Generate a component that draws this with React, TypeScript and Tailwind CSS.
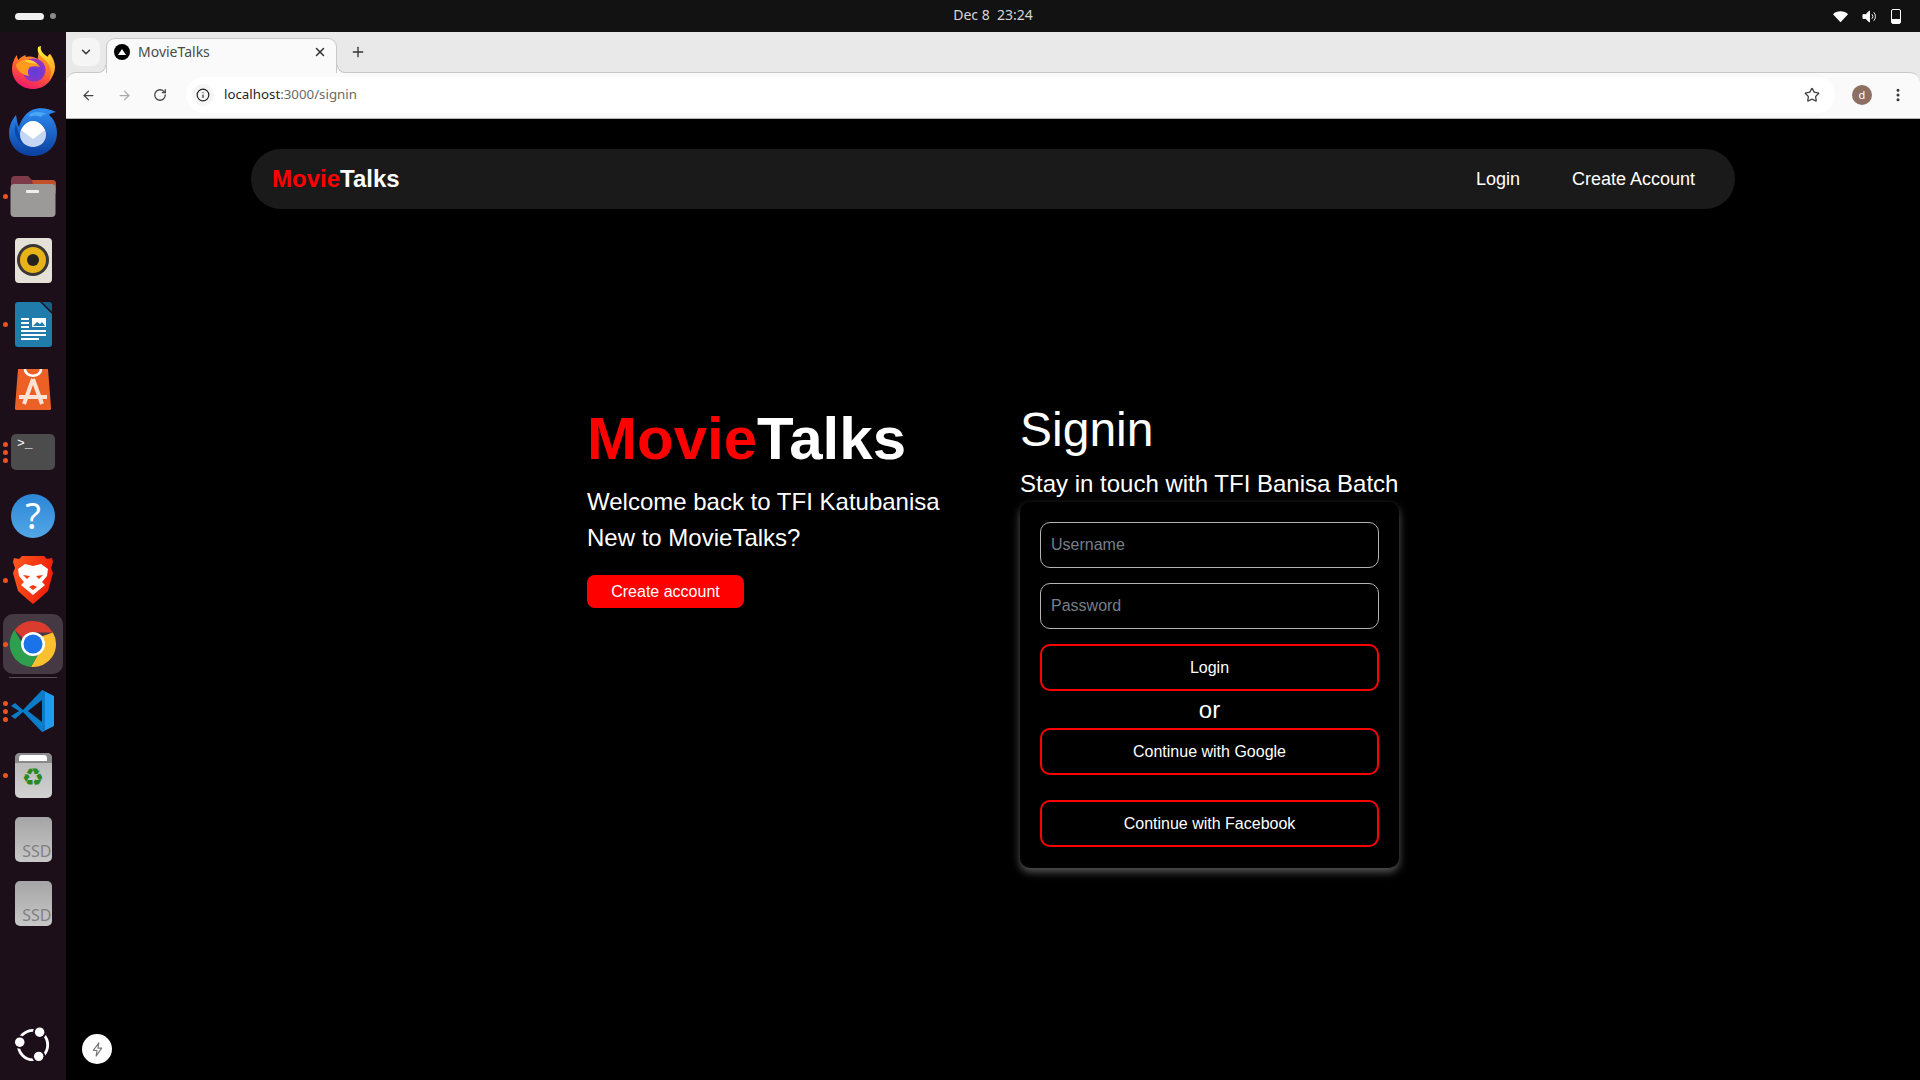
import React from 'react';
import { ArrowLeft, ArrowRight, ChevronDown, EllipsisVertical, Info, Plus, RotateCw, Star, X } from 'lucide-react';

const Firefox = () => (
    <svg viewBox="0 0 44 44" className="w-[44px] h-[44px]">
        <defs>
            <linearGradient id="ff1" x1="0.7" y1="0" x2="0.3" y2="1">
                <stop offset="0" stopColor="#ffb01f" />
                <stop offset="0.5" stopColor="#ff6a2a" />
                <stop offset="1" stopColor="#f0146e" />
            </linearGradient>
            <linearGradient id="ff3" x1="0.3" y1="0" x2="0.6" y2="1">
                <stop offset="0" stopColor="#fff03a" />
                <stop offset="1" stopColor="#ff9a1f" />
            </linearGradient>
            <radialGradient id="ff2" cx="0.55" cy="0.6" r="0.6">
                <stop offset="0" stopColor="#5a3fd8" />
                <stop offset="1" stopColor="#a22fbe" />
            </radialGradient>
        </defs>
        <path d="M29 1c-.5 4 1 6 4 9 1 1 2 1 3 2 1-2 1-3 2-3 4 5 5 10 5 13 0 12-9 21-21 21C10 43 1 34 1 23c0-3 .5-6 2-9 .5-2 2-4 3-5 0 2 .5 4 1.500 5 2-3 5-4 7-5 0 1 0 2 1 2 4-1 8 0 11 2 1-4 1-8 3-12z" fill="url(#ff1)" />
        <path d="M26 2c-1 5 1 8 5 11 5 4 8 9 8 14 0 3-1 6-2 8 4-4 6-8 6-13 0-3-1-8-5-13-1 0-1 1-2 3-1-1-2-1-3-2-3-3-5-5-4-9z" fill="url(#ff3)" transform="translate(1 -1)" />
        <circle cx="23" cy="24" r="11.500" fill="url(#ff2)" />
        <path d="M5 19c3-5 8-6 13-5 5 1 8 3 11 7-3-1-7-1-10 0-2 2-3 5-1 9-6-1-12-5-13-11z" fill="#ff9a1f" />
        <path d="M13 15c4-2 10-1 13 3-4-1-8-1-13-3z" fill="#ffd33a" />
    </svg>
);

const Thunderbird = () => (
    <svg viewBox="0 0 50 50" className="w-[50px] h-[50px]">
        <defs>
            <linearGradient id="tb1" x1="0.5" y1="0" x2="0.5" y2="1">
                <stop offset="0" stopColor="#2f8df2" />
                <stop offset="1" stopColor="#0a3f9e" />
            </linearGradient>
        </defs>
        <path d="M24 3c7-3 16-2 24 2-3 1-6 1-7 3 5 4 8 11 8 18 0 13-10 23-24 23S1 39 1 26C1 20 3 14 8 8c1 5 1 8 3 12 2-8 7-14 13-17z" fill="url(#tb1)" />
        <path d="M24 6c5-2 10-1 15 1-3 0-5 1-6 3-4-2-8-2-12 0 0-2 1-3 3-4z" fill="#4aa8f5" />
        <path d="M8 16c-1 4-2 8 0 13 3 6 8 10 15 11-5-3-9-6-11-11-2-4-3-8-4-13z" fill="#0a47ad" />
        <path d="M13 23c3-6 8-9 12-9s9 3 12 9c1 2 1 3 1 5 0 7-6 12-13 12s-13-5-13-12c0-2 0-3 1-5z" fill="#c3d6f2" />
        <path d="M13 23c3-6 8-9 12-9s9 3 12 9L25 32z" fill="#ffffff" />
    </svg>
);

const Files = () => (
    <svg viewBox="0 0 46 44" className="w-[46px] h-[44px]">
        <path d="M1 6a4 4 0 014-4h13l4 4h20a4 4 0 014 4v10H1z" fill="#7d3a48" />
        <path d="M22 6h20a4 4 0 014 4v6H24z" fill="#c2502a" />
        <rect x="0.500" y="10" width="45" height="33" rx="4" fill="#9c9a98" />
        <rect x="16" y="16" width="13" height="3" rx="1" fill="#eeeeee" />
    </svg>
);

const Rhythmbox = () => (
    <div className="w-[37px] h-[45px] rounded-[4px] bg-[#e6e1d6] flex items-center justify-center">
        <div className="w-[32px] h-[32px] rounded-full bg-[#3b3734] flex items-center justify-center">
            <div className="w-[26px] h-[26px] rounded-full bg-[#e8b318] flex items-center justify-center">
                <div className="w-[12px] h-[12px] rounded-full bg-[#24211f]" />
            </div>
        </div>
    </div>
);

const Writer = () => (
    <svg viewBox="0 0 37 45" className="w-[37px] h-[45px]">
        <path d="M3 0h22l12 12v30a3 3 0 01-3 3H3a3 3 0 01-3-3V3a3 3 0 013-3z" fill="#1f7cab" />
        <path d="M27 0h7a3 3 0 013 3v7z" fill="#15618c" />
        <rect x="6" y="16" width="8" height="2" fill="#fff" />
        <rect x="6" y="20" width="8" height="2" fill="#fff" />
        <rect x="6" y="24" width="8" height="2" fill="#fff" />
        <rect x="6" y="28" width="25" height="2" fill="#fff" />
        <rect x="6" y="32" width="25" height="2" fill="#fff" />
        <rect x="6" y="36" width="18" height="2" fill="#fff" />
        <rect x="17" y="16" width="14" height="9" fill="#fff" />
        <path d="M18 24l4-4 3 2 2-2 3 4z" fill="#1f7cab" />
    </svg>
);

const AppStore = () => (
    <svg viewBox="0 0 36 44" className="w-[36px] h-[44px]">
        <path d="M3 3h30l3 38a2 2 0 01-2 3H2a2 2 0 01-2-3z" fill="#ec5f25" />
        <path d="M10 3c0 9 16 9 16 0" fill="none" stroke="#fff" strokeWidth="2.500" />
        <path d="M18 13L9 38M18 13l9 25M4 31h28" fill="none" stroke="#fbe3d6" strokeWidth="4" />
    </svg>
);

const Terminal = () => (
    <div className="w-[44px] h-[36px] rounded-[5px] bg-[#4c4c4c] pl-[6px] pt-[3px] text-white text-[13px] leading-[14px] font-['Liberation_Mono',monospace]">&gt;_</div>
);

const Help = () => (
    <div className="w-[44px] h-[44px] rounded-full bg-gradient-to-b from-[#2b86d6] to-[#52a7e6] flex items-center justify-center text-white text-[36px] font-['Noto_Sans',sans-serif]">?</div>
);

const Brave = () => (
    <svg viewBox="0 0 40 48" className="w-[40px] h-[48px]">
        <defs>
            <linearGradient id="br1" x1="0" y1="0" x2="1" y2="0.3">
                <stop offset="0" stopColor="#ff5a1f" />
                <stop offset="1" stopColor="#f01f0a" />
            </linearGradient>
        </defs>
        <path d="M9 0h22l3 3 5-1 1 4-2 6 2 5-5 18-9 8-6 5-6-5-9-8L0 17l2-5-2-6 1-4 5 1z" fill="url(#br1)" />
        <path d="M5 13l7-5 8 2 8-2 7 5-1 7-5 6 3 3-6 5-6 5-6-5-6-5 3-3-5-6z" fill="#ffffff" />
        <path d="M10 19l7 1-3 3zM30 19l-7 1 3 3zM16 31l4-2 4 2-4 3z" fill="#f23c10" />
    </svg>
);

const Chrome = () => (
    <svg viewBox="0 0 48 48" className="w-[48px] h-[48px]">
        <path d="M24 1a23 23 0 0119.900 11.500H24a11.500 11.500 0 00-10 5.800L5.600 9.900A23 23 0 0124 1z" fill="#dc3c2e" />
        <path d="M43.900 12.500A23 23 0 0122 47l9.900-17.500a11.500 11.500 0 00-1-12.500z" fill="#fbc02d" />
        <path d="M22 47A23 23 0 015.600 9.900L14 24.500a11.500 11.500 0 0017.900 5z" fill="#2f9e4f" />
        <circle cx="24" cy="24" r="12" fill="#ffffff" />
        <circle cx="24" cy="24" r="9.500" fill="#1a73e8" />
    </svg>
);

const VsCode = () => (
    <svg viewBox="0 0 44 44" className="w-[44px] h-[44px]">
        <path d="M31 1l12 6v30l-12 6z" fill="#1f9cf0" />
        <path d="M31 1L12 21 4 14 0 17l8 5-8 5 4 3 8-7 19 20 3-2V3z" fill="#0a7cc8" />
        <path d="M31 11L17 22l14 11z" fill="#1d0f1a" />
    </svg>
);

const Trash = () => (
    <div className="w-[37px] h-[45px] rounded-[5px] bg-gradient-to-b from-[#b5b5b5] to-[#d2d2d2] flex flex-col items-center overflow-hidden">
        <div className="w-full h-[10px] bg-[#8a8a8a] flex justify-center pt-[2px]">
            <div className="w-[28px] h-[6px] rounded-t-[3px] bg-white" />
        </div>
        <div className="text-[#2a8a1e] text-[25px] leading-[30px] font-['DejaVu_Sans',sans-serif]">♻</div>
    </div>
);

const Ssd = () => (
    <div className="w-[37px] h-[45px] rounded-[5px] bg-gradient-to-b from-[#a5a5a5] to-[#c8c8c8] flex items-end justify-end pb-[2px] text-[#808080] text-[16px] leading-[18px] font-['Noto_Sans',sans-serif]">SSD</div>
);

const UbuntuLogo = () => (
    <svg viewBox="0 0 38 38" className="w-[36px] h-[36px]">
        <circle cx="19" cy="19" r="15.500" fill="none" stroke="#fff" strokeWidth="3" />
        <circle cx="26" cy="5.500" r="7" fill="#1d0f1a" />
        <circle cx="26" cy="5.500" r="5" fill="#fff" />
        <circle cx="5" cy="16" r="7" fill="#1d0f1a" />
        <circle cx="5" cy="16" r="5" fill="#fff" />
        <circle cx="25" cy="31" r="7" fill="#1d0f1a" />
        <circle cx="25" cy="31" r="5" fill="#fff" />
    </svg>
);

const dockItems = [
    { icon: <Firefox />, dots: 0 },
    { icon: <Thunderbird />, dots: 0 },
    { icon: <Files />, dots: 1 },
    { icon: <Rhythmbox />, dots: 0 },
    { icon: <Writer />, dots: 1 },
    { icon: <AppStore />, dots: 0 },
    { icon: <Terminal />, dots: 3 },
    { icon: <Help />, dots: 0 },
    { icon: <Brave />, dots: 1 },
];

const DockItem: React.FC<{ dots: number; children: React.ReactNode }> = ({ dots, children }) => (
    <div className="relative h-16 flex items-center justify-center">
        {dots > 0 && (
            <div className="absolute z-10 left-[3px] top-0 bottom-0 flex flex-col justify-center gap-[3px]">
                {[...Array(dots)].map((_, i) => (
                    <div key={i} className="w-[5px] h-[5px] rounded-full bg-[#e9541f]" />
                ))}
            </div>
        )}
        {children}
    </div>
);

const Dock = () => (
    <div className="w-[66px] shrink-0 bg-[#1d0f1a] flex flex-col pt-[4px]">
        {dockItems.map((item, index) => (
            <DockItem key={index} dots={item.dots}>{item.icon}</DockItem>
        ))}
        <DockItem dots={1}>
            <div className="absolute left-[3px] top-[2px] w-[60px] h-[60px] rounded-[10px] bg-[#453a43]" />
            <div className="relative"><Chrome /></div>
        </DockItem>
        <div className="mx-[9px] h-px bg-[#5a4f58] my-px" />
        <DockItem dots={3}><VsCode /></DockItem>
        <DockItem dots={1}><Trash /></DockItem>
        <DockItem dots={0}><Ssd /></DockItem>
        <DockItem dots={0}><Ssd /></DockItem>
        <div className="mt-auto mb-[17px] flex justify-center"><UbuntuLogo /></div>
    </div>
);

const TopBar = () => (
    <div className="relative h-8 shrink-0 bg-[#121212] flex items-center justify-between pl-[15px] pr-[19px]">
        <div className="flex items-center gap-[6px]">
            <div className="w-[29px] h-[7px] rounded-full bg-[#efefef]" />
            <div className="w-[6px] h-[6px] rounded-full bg-[#8a8a8a]" />
        </div>
        <div className="absolute left-[66px] right-0 top-[5px] text-center text-[14px] leading-[20px] text-[#d6d6d6] font-['Noto_Sans',sans-serif] pointer-events-none">Dec 8&nbsp; 23:24</div>
        <div className="flex items-center gap-[14px]">
            <svg viewBox="0 0 16 16" className="w-[15px] h-[15px]" fill="#fff"><path d="M0 5.500C2 3.500 5 2.500 8 2.500s6 1 8 3L8 14z" /></svg>
            <svg viewBox="0 0 16 16" className="w-[15px] h-[15px]" fill="none" stroke="#fff" strokeWidth="1"><path d="M1 6h3l4-4v12l-4-4H1z" fill="#fff" /><path d="M10.500 5.500a3.500 3.500 0 010 5M12.500 3.500a6.500 6.500 0 010 9" /></svg>
            <div className="relative w-[10px] h-[15px] rounded-[2px] border border-white">
                <div className="absolute left-0 right-0 bottom-0 h-[4px] bg-white" />
            </div>
        </div>
    </div>
);

const ChromeBar = () => (
    <div className="shrink-0 bg-[#e9e9e9] font-['Noto_Sans',sans-serif]">
        <div className="h-[40px] flex items-start pl-[6px] pt-[6px]">
            <div className="w-[28px] h-[28px] rounded-[8px] bg-[#f5f5f5] flex items-center justify-center">
                <ChevronDown className="w-[14px] h-[14px] text-[#333]" strokeWidth={2.5} />
            </div>
            <div className="relative z-10 ml-[6px] w-[231px] h-[35px] bg-[#fafafa] rounded-t-[9px] border border-b-0 border-[#c8c8c8] flex items-start pt-[4px] pl-[7px] pr-[9px]">
                <div className="absolute -left-[9px] bottom-0 w-2 h-2 bg-[#fafafa]">
                    <div className="w-2 h-2 bg-[#e9e9e9] rounded-br-[8px] border-r border-b border-[#c8c8c8]" />
                </div>
                <div className="absolute -right-[9px] bottom-0 w-2 h-2 bg-[#fafafa]">
                    <div className="w-2 h-2 bg-[#e9e9e9] rounded-bl-[8px] border-l border-b border-[#c8c8c8]" />
                </div>
                <div className="mt-[1px] w-4 h-4 rounded-full bg-black flex items-center justify-center">
                    <div className="w-0 h-0 border-l-[4px] border-r-[4px] border-b-[6px] border-l-transparent border-r-transparent border-b-white" />
                </div>
                <span className="ml-[8px] text-[14px] leading-[18px] text-[#4a4a4a] flex-1">MovieTalks</span>
                <X className="mt-[2px] w-[14px] h-[14px] text-[#333]" strokeWidth={2.5} />
            </div>
            <Plus className="ml-[13px] mt-[6px] w-[16px] h-[16px] text-[#333]" strokeWidth={2} />
        </div>
        <div className="h-[47px] bg-[#fafafa] rounded-t-[10px] border-t border-b border-t-[#c8c8c8] border-b-[#b5b5b5] flex items-center pl-[15px] pr-[14px] pb-[1px]">
            <ArrowLeft className="w-[15px] h-[15px] text-[#444]" strokeWidth={2} />
            <ArrowRight className="ml-[21px] w-[15px] h-[15px] text-[#aaa]" strokeWidth={2} />
            <RotateCw className="ml-[21px] w-[14px] h-[14px] text-[#444]" strokeWidth={2.2} />
            <div className="ml-[19px] flex-1 h-[36px] rounded-full bg-white flex items-center pl-[6px]">
                <div className="w-[22px] h-[22px] rounded-full bg-[#f6f6f6] flex items-center justify-center">
                    <Info className="w-[14px] h-[14px] text-[#222]" strokeWidth={2} />
                </div>
                <span className="ml-[10px] text-[13.300px] text-[#1f1f1f]">localhost<span className="text-[#6a6a6a]">:3000/signin</span></span>
                <Star className="ml-auto mr-[15px] w-[16px] h-[16px] text-[#444]" strokeWidth={2} />
            </div>
            <div className="ml-[17px] w-5 h-5 rounded-full bg-[#8d6e63] flex items-center justify-center text-white text-[11px]">d</div>
            <EllipsisVertical className="ml-[18px] w-[16px] h-[16px] text-[#333]" strokeWidth={2.5} />
        </div>
    </div>
);

const Brand: React.FC<{ className: string }> = ({ className }) => (
    <div className={`font-bold text-white ${className}`}><span className="text-[#ff0000]">Movie</span>Talks</div>
);

const SocialButton: React.FC<{ label: string; className?: string }> = ({ label, className }) => (
    <button type="button" className={`w-full h-[47px] rounded-[10px] border-2 border-[#ff0000] bg-black text-white text-base ${className ?? ''}`}>{label}</button>
);

const Field: React.FC<{ placeholder: string; className?: string }> = ({ placeholder, className }) => (
    <input placeholder={placeholder} className={`w-full h-[46px] rounded-[10px] border border-[#b4b4b4] bg-black px-[10px] text-base text-white placeholder:text-[#757f8c] outline-none ${className ?? ''}`} />
);

const SigninPage = () => (
    <div className="relative flex-1 bg-black font-['Liberation_Sans',Arial,sans-serif] text-white">
        <nav className="mx-[185px] mt-[30px] h-[60px] rounded-[30px] bg-[#1a1a1a] flex items-center justify-between pl-[21px] pr-[40px]">
            <Brand className="text-2xl" />
            <div className="flex items-center gap-[52px] text-lg">
                <span>Login</span>
                <span>Create Account</span>
            </div>
        </nav>
        <div className="flex justify-center mt-[192px]">
            <div className="w-[433px] pt-[2px]">
                <Brand className="text-6xl leading-[72px]" />
                <p className="mt-[9px] text-2xl leading-9">Welcome back to TFI Katubanisa</p>
                <p className="text-2xl leading-9">New to MovieTalks?</p>
                <button type="button" className="mt-[19px] w-[157px] h-[33px] rounded-[8px] bg-[#ff0000] text-white text-base">Create account</button>
            </div>
            <div className="w-[379px]">
                <h1 className="text-5xl leading-[58px]">Signin</h1>
                <p className="mt-[10px] text-2xl leading-[29px] whitespace-nowrap">Stay in touch with TFI Banisa Batch</p>
                <div className="mt-[4px] h-[366px] rounded-[10px] bg-black px-[20px] pt-[20px] shadow-[0_4px_8px_rgba(255,255,255,0.35)]">
                    <Field placeholder="Username" />
                    <Field placeholder="Password" className="mt-[15px]" />
                    <SocialButton label="Login" className="mt-[15px]" />
                    <div className="text-center text-2xl leading-[37px]">or</div>
                    <SocialButton label="Continue with Google" />
                    <SocialButton label="Continue with Facebook" className="mt-[25px]" />
                </div>
            </div>
        </div>
        <div className="absolute left-[16px] bottom-[16px] w-[30px] h-[30px] rounded-full bg-white flex items-center justify-center">
            <svg viewBox="0 0 16 16" className="w-[15px] h-[15px]" fill="none" stroke="#777" strokeWidth="1.200" strokeLinejoin="round">
                <path d="M9.500 1L3.500 9h4L6.500 15l6-8.500h-4z" />
            </svg>
        </div>
    </div>
);

export default function App() {
    return (
        <div className="w-screen h-screen overflow-hidden flex flex-col bg-black">
            <TopBar />
            <div className="flex-1 flex min-h-0">
                <Dock />
                <div className="flex-1 flex flex-col min-w-0">
                    <ChromeBar />
                    <SigninPage />
                </div>
            </div>
        </div>
    );
}
